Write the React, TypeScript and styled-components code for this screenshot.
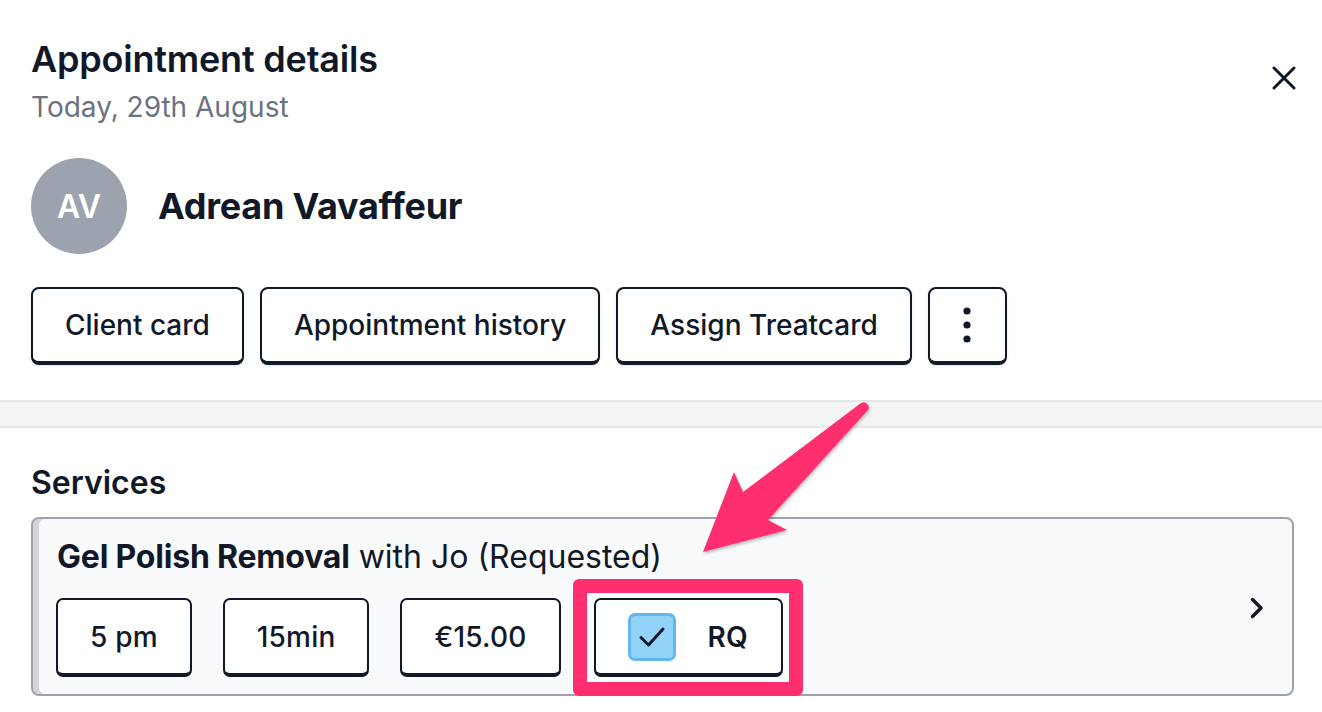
import React from "react";
import styled, { createGlobalStyle } from "styled-components";

const GlobalStyle = createGlobalStyle`
  html, body { margin: 0; padding: 0; background: #ffffff; }
  body { font-family: Inter, "Noto Sans", sans-serif; color: #111827; }
  * { box-sizing: border-box; }
`;

const Page = styled.div`
  position: relative;
  width: 1322px;
  height: 712px;
  overflow: hidden;
  background: #ffffff;
`;

const Header = styled.header`
  display: flex;
  justify-content: space-between;
  align-items: flex-start;
  padding: 37px 26px 0 31px;
`;

const TitleBlock = styled.div`
  display: flex;
  flex-direction: column;
  gap: 8px;
`;

const Title = styled.h1`
  margin: 0;
  font-size: 36px;
  line-height: 44px;
  font-weight: 600;
  letter-spacing: -0.2px;
  color: #111827;
`;

const Subtitle = styled.div`
  font-size: 28px;
  line-height: 36px;
  color: #6b7280;
`;

const CloseButton = styled.button`
  margin-top: 29px;
  width: 24px;
  height: 24px;
  padding: 0;
  border: none;
  background: none;
  display: flex;
  color: #111827;
`;

const ClientRow = styled.div`
  display: flex;
  align-items: center;
  gap: 31px;
  margin: 33px 0 0 31px;
`;

const Avatar = styled.div`
  width: 96px;
  height: 96px;
  border-radius: 50%;
  background: #9ca3af;
  color: #ffffff;
  display: flex;
  align-items: center;
  justify-content: center;
  font-size: 32px;
  font-weight: 600;
`;

const ClientName = styled.div`
  font-size: 36px;
  line-height: 44px;
  font-weight: 700;
  letter-spacing: -0.25px;
  color: #111827;
`;

const ActionRow = styled.div`
  display: flex;
  gap: 16px;
  margin: 33px 0 0 31px;
`;

const OutlineButton = styled.button<{ $square?: boolean }>`
  height: 78px;
  padding: ${(p) => (p.$square ? "0" : "0 32px")};
  width: ${(p) => (p.$square ? "79px" : "auto")};
  display: flex;
  align-items: center;
  justify-content: center;
  background: #ffffff;
  border: 2px solid #111827;
  border-bottom-width: 4px;
  border-radius: 8px;
  box-shadow: 0 1px 3px rgba(17, 24, 39, 0.12);
  font-family: Inter, "Noto Sans", sans-serif;
  font-size: 28px;
  font-weight: 500;
  color: #111827;
`;

const Band = styled.div`
  margin-top: 35px;
  height: 28px;
  background: #f3f4f6;
  border-top: 2px solid #e5e7eb;
  border-bottom: 2px solid #e5e7eb;
`;

const Section = styled.section`
  padding: 35px 28px 0 31px;
`;

const SectionTitle = styled.h2`
  margin: 0;
  font-size: 32px;
  line-height: 40px;
  font-weight: 600;
  color: #111827;
`;

const ServiceCard = styled.div`
  margin-top: 14px;
  display: flex;
  align-items: center;
  justify-content: space-between;
  padding: 20px 28px 17px 23px;
  background: #f9fafb;
  border: 2px solid #9ca3af;
  border-radius: 8px;
  box-shadow: inset 6px 0 0 #d4d4d8;
`;

const ServiceBody = styled.div`
  display: flex;
  flex-direction: column;
  gap: 23px;
`;

const ServiceName = styled.div`
  font-size: 32px;
  line-height: 36px;
  color: #111827;
  padding-left: 1px;

  strong {
    font-weight: 700;
    letter-spacing: -0.2px;
  }
`;

const ChipRow = styled.div`
  display: flex;
  gap: 31px;
`;

const Chip = styled.div`
  position: relative;
  z-index: 1;
  height: 79px;
  padding: 0 32px;
  display: flex;
  align-items: center;
  gap: 32px;
  background: #ffffff;
  border: 2px solid #111827;
  border-bottom-width: 4px;
  border-radius: 7px;
  font-size: 28px;
  font-weight: 500;
  color: #111827;
`;

const ChipLabel = styled.span<{ $strong?: boolean }>`
  font-weight: ${(p) => (p.$strong ? 600 : 500)};
  letter-spacing: 0.2px;
  padding-right: ${(p) => (p.$strong ? "1px" : "0")};
`;

const Highlighted = styled.div`
  position: relative;
  margin-left: 2px;
`;

const HighlightFrame = styled.span`
  position: absolute;
  top: -19px;
  bottom: -19px;
  left: -21px;
  right: -20px;
  border: 14px solid #ff2e6e;
  border-radius: 6px;
  background: #fefefe;
  z-index: 0;
`;

const CheckBox = styled.span`
  width: 48px;
  height: 48px;
  border-radius: 7px;
  background: #93d2f8;
  border: 3px solid #63b6f0;
  display: flex;
  align-items: center;
  justify-content: center;
`;

const Chevron = styled.span`
  display: flex;
  color: #111827;
`;

const ArrowLayer = styled.svg`
  position: absolute;
  left: 0;
  top: 0;
  width: 1322px;
  height: 712px;
  pointer-events: none;
  z-index: 5;
`;

export default function App() {
  return (
    <Page>
      <GlobalStyle />
      <Header>
        <TitleBlock>
          <Title>Appointment details</Title>
          <Subtitle>Today, 29th August</Subtitle>
        </TitleBlock>
        <CloseButton aria-label="Close">
          <svg width="24" height="24" viewBox="0 0 24 24" fill="none">
            <path d="M2 2L22 22M22 2L2 22" stroke="currentColor" strokeWidth="3" strokeLinecap="round" />
          </svg>
        </CloseButton>
      </Header>

      <ClientRow>
        <Avatar>AV</Avatar>
        <ClientName>Adrean Vavaffeur</ClientName>
      </ClientRow>

      <ActionRow>
        <OutlineButton>Client card</OutlineButton>
        <OutlineButton>Appointment history</OutlineButton>
        <OutlineButton>Assign Treatcard</OutlineButton>
        <OutlineButton $square aria-label="More">
          <svg width="8" height="36" viewBox="0 0 8 36">
            <circle cx="4" cy="4" r="3.6" fill="#111827" />
            <circle cx="4" cy="18" r="3.6" fill="#111827" />
            <circle cx="4" cy="32" r="3.6" fill="#111827" />
          </svg>
        </OutlineButton>
      </ActionRow>

      <Band />

      <Section>
        <SectionTitle>Services</SectionTitle>
        <ServiceCard>
          <ServiceBody>
            <ServiceName>
              <strong>Gel Polish Removal</strong> with Jo (Requested)
            </ServiceName>
            <ChipRow>
              <Chip><ChipLabel>5 pm</ChipLabel></Chip>
              <Chip><ChipLabel>15min</ChipLabel></Chip>
              <Chip><ChipLabel>€15.00</ChipLabel></Chip>
              <Highlighted>
                <HighlightFrame />
                <Chip>
                  <CheckBox>
                    <svg width="28" height="24" viewBox="0 0 28 24" fill="none">
                      <path d="M3 12.5L10.5 20L25 4" stroke="#111827" strokeWidth="3" strokeLinecap="round" strokeLinejoin="round" />
                    </svg>
                  </CheckBox>
                  <ChipLabel $strong>RQ</ChipLabel>
                </Chip>
              </Highlighted>
            </ChipRow>
          </ServiceBody>
          <Chevron>
            <svg width="14" height="22" viewBox="0 0 14 22" fill="none">
              <path d="M2.5 2.5L11 11L2.5 19.5" stroke="currentColor" strokeWidth="3.5" strokeLinecap="round" strokeLinejoin="round" />
            </svg>
          </Chevron>
        </ServiceCard>
      </Section>

      <ArrowLayer viewBox="0 0 1322 712">
        <defs>
          <filter id="arrowShadow" x="-10%" y="-10%" width="130%" height="130%">
            <feDropShadow dx="1" dy="2" stdDeviation="1.5" floodColor="#000" floodOpacity="0.25" />
          </filter>
        </defs>
        <path
          d="M860.7 403.3 L743 492 L734 472 L703 552 L787 530 L768 520 L867.3 410.7 A5 5 0 0 0 860.7 403.3 Z"
          fill="#ff2e6e"
          filter="url(#arrowShadow)"
        />
      </ArrowLayer>
    </Page>
  );
}
